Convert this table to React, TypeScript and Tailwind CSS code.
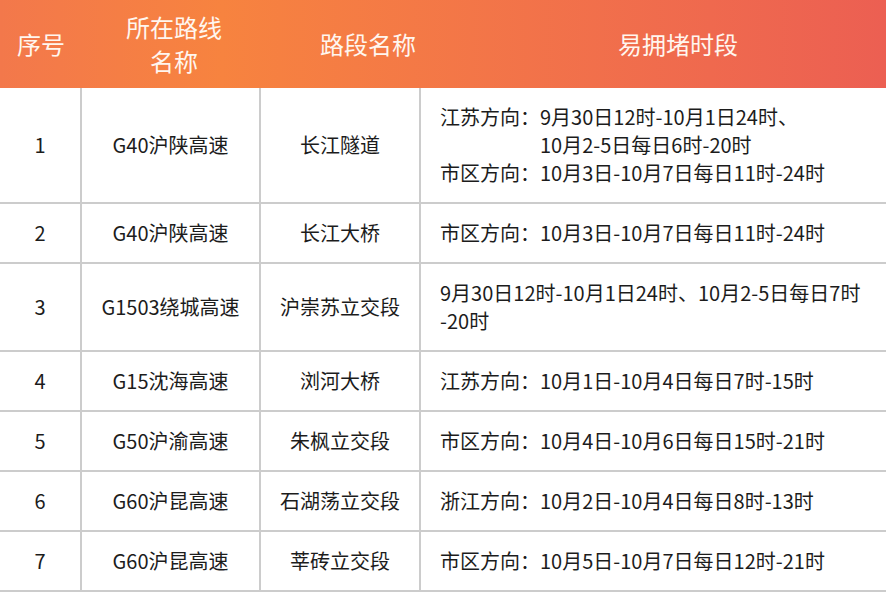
const rows: { no: string; road: string; section: string; times: { label?: string; lines: string[] }[] }[] = [
  {
    no: '1',
    road: 'G40沪陕高速',
    section: '长江隧道',
    times: [
      { label: '江苏方向：', lines: ['9月30日12时-10月1日24时、', '10月2-5日每日6时-20时'] },
      { label: '市区方向：', lines: ['10月3日-10月7日每日11时-24时'] },
    ],
  },
  {
    no: '2',
    road: 'G40沪陕高速',
    section: '长江大桥',
    times: [{ label: '市区方向：', lines: ['10月3日-10月7日每日11时-24时'] }],
  },
  {
    no: '3',
    road: 'G1503绕城高速',
    section: '沪崇苏立交段',
    times: [{ lines: ['9月30日12时-10月1日24时、10月2-5日每日7时', '-20时'] }],
  },
  {
    no: '4',
    road: 'G15沈海高速',
    section: '浏河大桥',
    times: [{ label: '江苏方向：', lines: ['10月1日-10月4日每日7时-15时'] }],
  },
  {
    no: '5',
    road: 'G50沪渝高速',
    section: '朱枫立交段',
    times: [{ label: '市区方向：', lines: ['10月4日-10月6日每日15时-21时'] }],
  },
  {
    no: '6',
    road: 'G60沪昆高速',
    section: '石湖荡立交段',
    times: [{ label: '浙江方向：', lines: ['10月2日-10月4日每日8时-13时'] }],
  },
  {
    no: '7',
    road: 'G60沪昆高速',
    section: '莘砖立交段',
    times: [{ label: '市区方向：', lines: ['10月5日-10月7日每日12时-21时'] }],
  },
]

const cell = 'flex items-center justify-center text-center border-b-2 border-r-2 border-[#cccccc] py-[15px]'

export default function App() {
  return (
    <div
      className="w-[886px] h-[592px] overflow-hidden bg-white text-[#1c1c1c] text-[20px] leading-[28px]"
      style={{ fontFamily: '"Noto Sans CJK SC", "Noto Sans", sans-serif' }}
    >
      <div className="grid grid-cols-[82px_184px_204px_1fr] h-[88px] text-[24px] leading-[34px] text-[#fff6ef] bg-gradient-to-r from-[#f3784b] via-[#f7833f] via-25% to-[#ec5f52]">
        <div className="flex items-center justify-center">序号</div>
        <div className="flex items-center justify-center text-center">
          所在路线
          <br />
          名称
        </div>
        <div className="flex items-center justify-center">路段名称</div>
        <div className="flex items-center justify-center">易拥堵时段</div>
      </div>

      <div className="grid grid-cols-[82px_179px_160px_1fr]">
        {rows.map(r => (
          <div key={r.no} className="contents">
            <div className={cell}>{r.no}</div>
            <div className={cell}>{r.road}</div>
            <div className={cell}>{r.section}</div>
            <div className="flex flex-col justify-center border-b-2 border-[#cccccc] py-[15px] pl-[19px] pr-[10px] whitespace-nowrap">
              {r.times.map((t, i) =>
                t.label ? (
                  <div key={i} className="flex">
                    <span className="shrink-0">{t.label}</span>
                    <div>
                      {t.lines.map(l => (
                        <div key={l}>{l}</div>
                      ))}
                    </div>
                  </div>
                ) : (
                  <div key={i}>
                    {t.lines.map(l => (
                      <div key={l}>{l}</div>
                    ))}
                  </div>
                ),
              )}
            </div>
          </div>
        ))}
      </div>
    </div>
  )
}
